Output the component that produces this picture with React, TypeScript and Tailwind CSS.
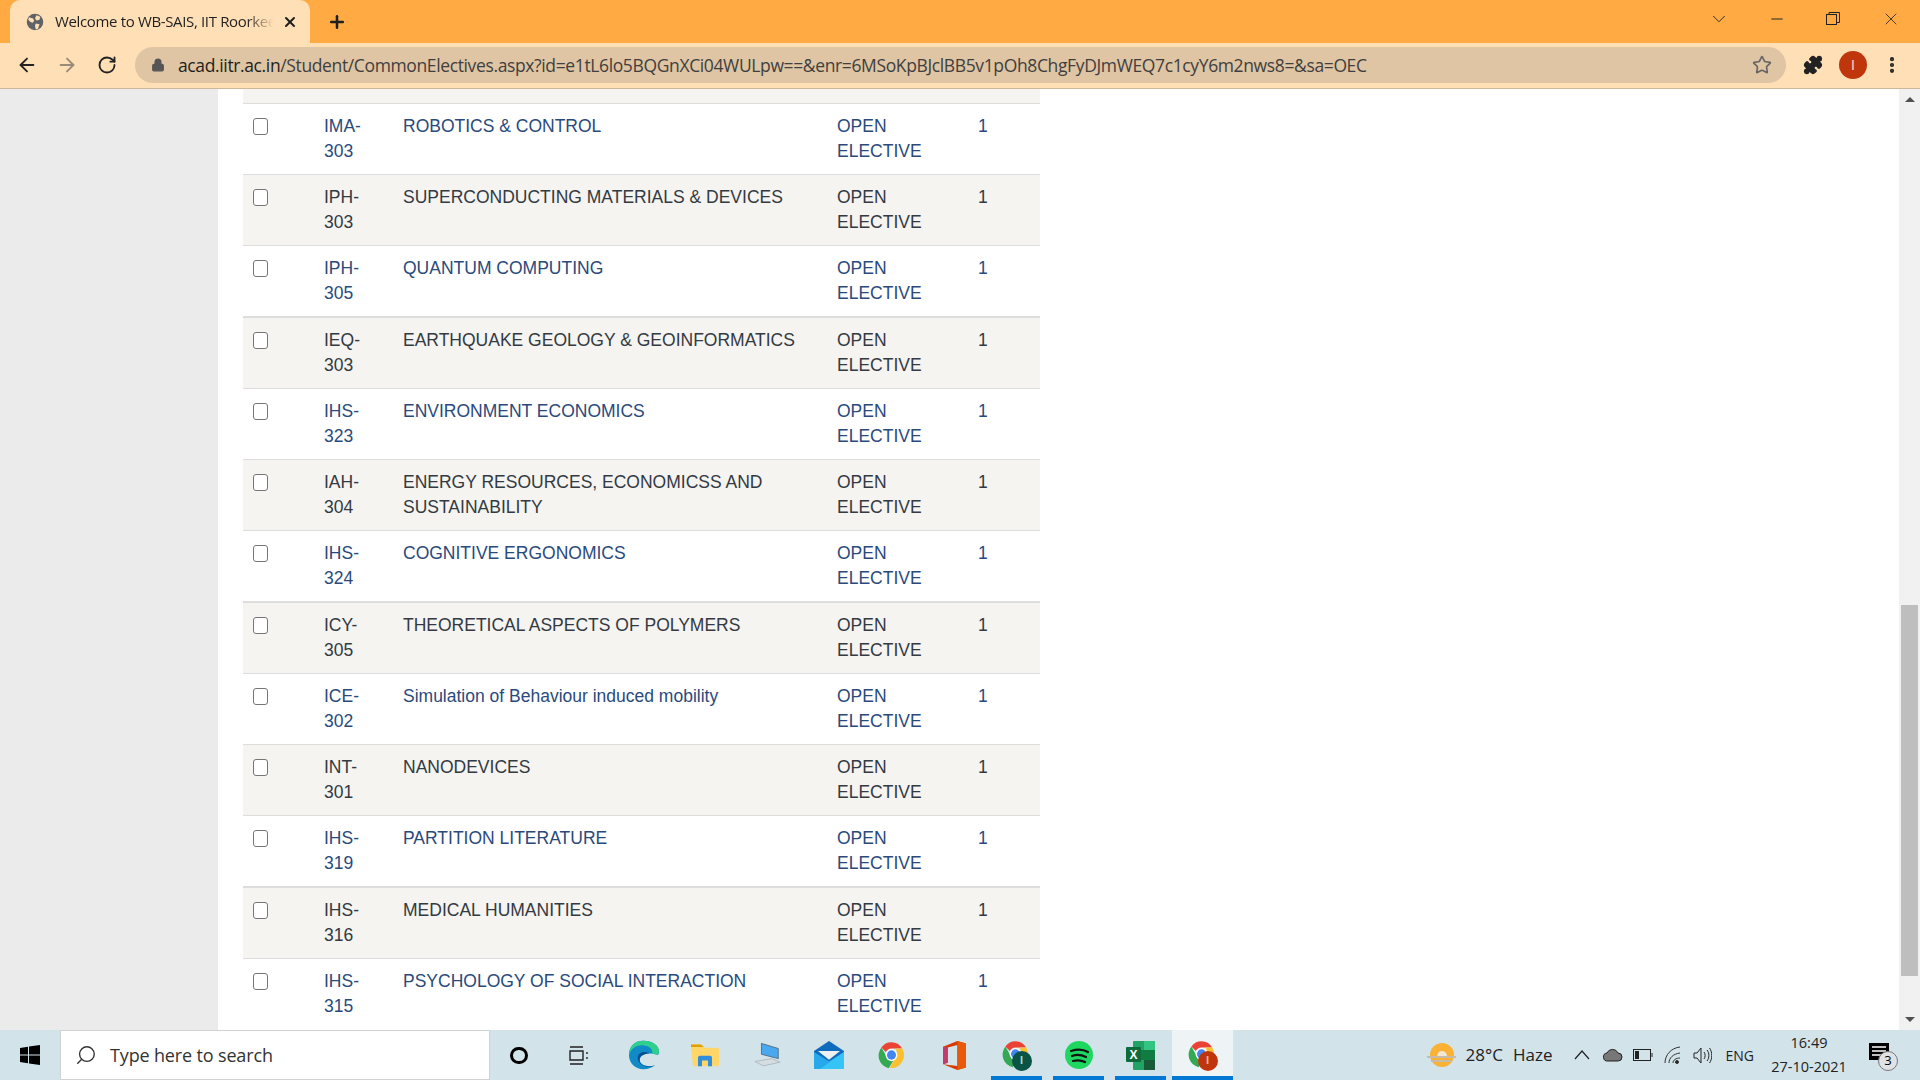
import { ArrowLeft, ArrowRight, RotateCw, Lock, Star, Puzzle, EllipsisVertical, ChevronDown, Minus, X, Plus, Search } from "lucide-react";

type Course = { code: string; num: string; name: React.ReactNode };

const courses: Course[] = [
  { code: "IMA-", num: "303", name: "ROBOTICS & CONTROL" },
  { code: "IPH-", num: "303", name: "SUPERCONDUCTING MATERIALS & DEVICES" },
  { code: "IPH-", num: "305", name: "QUANTUM COMPUTING" },
  { code: "IEQ-", num: "303", name: "EARTHQUAKE GEOLOGY & GEOINFORMATICS" },
  { code: "IHS-", num: "323", name: "ENVIRONMENT ECONOMICS" },
  { code: "IAH-", num: "304", name: "ENERGY RESOURCES, ECONOMICSS AND SUSTAINABILITY" },
  { code: "IHS-", num: "324", name: "COGNITIVE ERGONOMICS" },
  { code: "ICY-", num: "305", name: "THEORETICAL ASPECTS OF POLYMERS" },
  { code: "ICE-", num: "302", name: "Simulation of Behaviour induced mobility" },
  { code: "INT-", num: "301", name: "NANODEVICES" },
  { code: "IHS-", num: "319", name: "PARTITION LITERATURE" },
  { code: "IHS-", num: "316", name: "MEDICAL HUMANITIES" },
  { code: "IHS-", num: "315", name: "PSYCHOLOGY OF SOCIAL INTERACTION" },
];

function Row({ course, index }: { course: Course; index: number }) {
  const striped = index % 2 === 1;
  // every fourth rule is heavier in the capture
  const thick = index % 4 === 3;
  return (
    <div
      className={`grid h-[71.25px] shrink-0 grid-cols-[81px_79px_434px_141px_62px] border-[#dddddd] pt-[10px] text-[17.5px] leading-[25px] ${
        thick ? "border-t-2" : "border-t"
      } ${striped ? "bg-[#f5f4f1] text-[#333a42]" : "bg-white text-[#2a4a7c]"}`}
    >
      <div className="pl-[10px] pt-[4px]">
        <input type="checkbox" className="block h-[17px] w-[15px] appearance-none rounded-[3px] border border-[#767676] bg-white" />
      </div>
      <div>
        {course.code}
        <br />
        {course.num}
      </div>
      <div className="pr-[20px]">{course.name}</div>
      <div>
        OPEN
        <br />
        ELECTIVE
      </div>
      <div>1</div>
    </div>
  );
}

function ChromeIcon() {
  return (
    <svg width="27" height="28" viewBox="0 0 48 48" preserveAspectRatio="none">
      <path d="M24 2a22 22 0 0 1 19 11H24a11 11 0 0 0-10 6L6 11A22 22 0 0 1 24 2z" fill="#ea4335" />
      <path d="M6 11l9.500 16.500A11 11 0 0 0 27 34l-8 12.500A22 22 0 0 1 6 11z" fill="#34a853" />
      <path d="M43 13a22 22 0 0 1-22 33l9-15.500A11 11 0 0 0 33 18l-1-5z" fill="#fbc02d" />
      <circle cx="24" cy="24" r="10.500" fill="#fff" />
      <circle cx="24" cy="24" r="8" fill="#4285f4" />
    </svg>
  );
}

function ChromeBadge({ color, fg }: { color: string; fg: string }) {
  return (
    <div className="relative h-[31px] w-[30px]">
      <ChromeIcon />
      <div
        className="absolute bottom-0 right-0 flex h-[20px] w-[20px] items-center justify-center rounded-full text-[11px] font-bold"
        style={{ backgroundColor: color, color: fg }}
      >
        I
      </div>
    </div>
  );
}

function TaskSlot({ w, active, open, children }: { w: string; active?: boolean; open?: boolean; children: React.ReactNode }) {
  return (
    <div className={`relative flex h-full shrink-0 items-center justify-center ${w} ${active ? "bg-[#eef3f6]" : ""}`}>
      {children}
      {open && <div className="absolute inset-x-0 bottom-0 h-[4px] bg-[#0078d4]" />}
    </div>
  );
}

export default function App() {
  return (
    <div className="flex h-[1080px] w-[1920px] flex-col overflow-hidden bg-white font-['Liberation_Sans',sans-serif]">
      {/* tab strip */}
      <div className="flex h-[43px] shrink-0 items-end bg-[#ffaa42] pl-[10px] text-[#1f1f1f]">
        <div className="flex h-[43px] w-[300px] items-center rounded-t-[10px] bg-[#ffdfb5] pl-[16px] pr-[12px]">
          <svg width="18" height="18" viewBox="0 0 24 24" className="shrink-0">
            <circle cx="12" cy="12" r="11" fill="#5f6368" />
            <path d="M4 6l5 1 2 3-2 3-3-1-3-3zM14 3l5 2-1 4-4 1-2-3zM13 14l5 1-2 6-3 1-1-5z" fill="#ffdfb5" />
          </svg>
          <div className="ml-[11px] flex-1 overflow-hidden whitespace-nowrap font-['Open_Sans',sans-serif] text-[15px] tracking-[-0.35px] [mask-image:linear-gradient(to_right,black_86%,transparent_98%)]">
            Welcome to WB-SAIS, IIT Roorkee
          </div>
          <X size={16} strokeWidth={3} className="ml-[4px] shrink-0" />
        </div>
        <div className="flex h-[43px] w-[54px] items-center justify-center">
          <Plus size={20} strokeWidth={3} />
        </div>
        <div className="flex-1" />
        <div className="flex h-[43px] items-center pb-[5px] text-[#222]">
          <ChevronDown size={22} strokeWidth={1} className="mr-[38px]" />
          <Minus size={18} strokeWidth={1.3} className="mr-[40px]" />
          <svg width="14" height="14" viewBox="0 0 14 14" fill="none" stroke="currentColor" className="mr-[41px]">
            <rect x="0.500" y="2.500" width="10" height="10" />
            <path d="M3 2.500V.5h10.500v10H11" />
          </svg>
          <X size={20} strokeWidth={1} className="mr-[19px]" />
        </div>
      </div>

      {/* toolbar */}
      <div className="flex h-[46px] shrink-0 items-center border-b border-[#d0b79b] bg-[#ffdfb5] pb-[1px]">
        <ArrowLeft size={22} strokeWidth={2} className="ml-[16px] text-[#222]" />
        <ArrowRight size={22} strokeWidth={2} className="ml-[18px] text-[#9a8a78]" />
        <RotateCw size={20} strokeWidth={2.2} className="ml-[19px] text-[#222]" />
        <div className="ml-[18px] flex h-[36px] w-[1651px] items-center rounded-full bg-[#dfc5a3] pl-[16px] pr-[14px]">
          <Lock size={14} fill="#555" strokeWidth={2.200} className="text-[#555]" />
          <div className="ml-[13px] flex-1 whitespace-nowrap font-['Open_Sans',sans-serif] text-[17.5px] tracking-[-0.37px] text-[#3f3f3f]">
            <span className="text-[#1e1e1e]">acad.iitr.ac.in</span>
            /Student/CommonElectives.aspx?id=e1tL6lo5BQGnXCi04WULpw==&amp;enr=6MSoKpBJclBB5v1pOh8ChgFyDJmWEQ7c1cyY6m2nws8=&amp;sa=OEC
          </div>
          <Star size={20} strokeWidth={2} className="text-[#666]" />
        </div>
        <Puzzle size={20} fill="#222" strokeWidth={2} className="ml-[17px] text-[#222]" />
        <div className="ml-[16px] flex h-[28px] w-[28px] items-center justify-center rounded-full bg-[#c0360c] text-[14px] text-[#ffd9c0]">I</div>
        <EllipsisVertical size={20} strokeWidth={3} className="ml-[15px] text-[#222]" />
      </div>

      {/* page */}
      <div className="flex min-h-0 flex-1">
        <div className="w-[218px] shrink-0 bg-[#ebebeb]" />
        <div className="flex min-w-0 flex-1 flex-col overflow-hidden pl-[25px]">
          <div className="flex w-[797px] flex-col">
            <div className="h-[13.5px] shrink-0 bg-[#f5f4f1]" />
            {courses.map((c, i) => (
              <Row key={c.code + c.num} course={c} index={i} />
            ))}
          </div>
        </div>
        {/* scrollbar */}
        <div className="flex w-[21px] shrink-0 flex-col items-center bg-[#f1f1f1]">
          <div className="mt-[8px] h-0 w-0 border-x-[5px] border-b-[5px] border-x-transparent border-b-[#505050]" />
          <div className="mt-[503px] h-[371px] w-[17px] bg-[#bebebe]" />
          <div className="mt-[41px] h-0 w-0 border-x-[5px] border-t-[5px] border-x-transparent border-t-[#505050]" />
        </div>
      </div>

      {/* taskbar */}
      <div className="flex h-[50px] shrink-0 items-center bg-[#d3e3ea]">
        <div className="flex w-[60px] shrink-0 justify-center">
          <svg width="20" height="20" viewBox="0 0 20 20" fill="#000">
            <path d="M0 3l8-1.200V9.500H0zM9 1.600L20 0v9.500H9zM0 10.500h8v7.700L0 17zM9 10.500h11V20L9 18.400z" />
          </svg>
        </div>
        <div className="flex h-[50px] w-[430px] shrink-0 items-center border border-[#cfd3d6] bg-white pl-[14px] font-['Open_Sans',sans-serif] text-[18px] text-[#333]">
          <Search size={22} strokeWidth={1.5} className="-scale-x-100" />
          <span className="ml-[13px] tracking-[-0.15px]">Type here to search</span>
        </div>
        <TaskSlot w="w-[58px]">
          <div className="h-[17px] w-[18px] rounded-full border-[3px] border-black" />
        </TaskSlot>
        <TaskSlot w="w-[62px]">
          <svg width="20" height="19" viewBox="0 0 20 19" fill="none" stroke="#222" strokeWidth="1.400">
            <path d="M1 1h13M1 18h13M1 5h13v9H1zM18 6v2M18 11v2" />
          </svg>
        </TaskSlot>
        <TaskSlot w="w-[66px]">
          <svg width="31" height="30" viewBox="0 0 32 38" preserveAspectRatio="none">
            <path d="M16 1C6 1 1 9 1 19c0 10 6 18 15 18 5 0 9-2 12-5-8 3-16 0-16-7 0-5 5-8 10-8 5 0 9 2 9 2 1-2 1-3 1-4C32 7 25 1 16 1z" fill="#0f8bc8" />
            <path d="M1 19C3 10 10 5 17 7c6 1 9 6 8 10 2 1 4 2 6 1 1-2 1-3 1-4C32 7 25 1 16 1 6 1 1 9 1 19z" fill="#2fd08c" />
            <path d="M12 25c0-5 5-8 10-8-3-3-12-3-12 6 0 6 6 11 12 11 2 0 4-1 6-2-8 3-16 0-16-7z" fill="#0a4f8f" />
          </svg>
        </TaskSlot>
        <TaskSlot w="w-[58px]">
          <svg width="28" height="24" viewBox="0 0 28 30" preserveAspectRatio="none">
            <path d="M0 4a2 2 0 0 1 2-2h8l3 4h13a2 2 0 0 1 2 2v19a2 2 0 0 1-2 2H2z" fill="#ffd667" />
            <path d="M0 2h10l3 3H0z" fill="#e0a000" />
            <path d="M7 29V18a2 2 0 0 1 2-2h10a2 2 0 0 1 2 2v11h-4v-7h-6v7z" fill="#2f8fdc" />
          </svg>
        </TaskSlot>
        <TaskSlot w="w-[68px]">
          <svg width="28" height="26" viewBox="0 0 30 36" preserveAspectRatio="none">
            <path d="M8 2l18 7v14l-18-6z" fill="#4aa8ee" stroke="#4a6478" />
            <path d="M1 27l18-4 9 5-18 5z" fill="#d6dde2" stroke="#a8b4bc" />
          </svg>
        </TaskSlot>
        <TaskSlot w="w-[54px]">
          <svg width="30" height="28" viewBox="0 0 30 36" preserveAspectRatio="none">
            <path d="M15 0L30 13v23H0V13z" fill="#0f6cbd" />
            <path d="M4 13h22l-11 11z" fill="#eef1f3" />
            <path d="M0 14l15 12 15-12v22H0z" fill="#28a8ea" />
            <path d="M30 14v22H6z" fill="#35c4f5" />
          </svg>
        </TaskSlot>
        <TaskSlot w="w-[70px]">
          <ChromeIcon />
        </TaskSlot>
        <TaskSlot w="w-[56px]">
          <svg width="23" height="29" viewBox="0 0 24 36" preserveAspectRatio="none">
            <path d="M0 7L15 0l9 3v30l-9 3-15-7 15 2V5L5 8v19l-5 2z" fill="#d83b01" />
            <path d="M15 0l9 3v30l-9 3z" fill="#e8590c" />
            <path d="M0 7l5 1v19l-5 2z" fill="#c43a6f" />
          </svg>
        </TaskSlot>
        <div className="w-[9px] shrink-0" />
        <TaskSlot w="w-[51px]" open>
          <ChromeBadge color="#0b5345" fg="#a8d8c8" />
        </TaskSlot>
        <div className="w-[11px] shrink-0" />
        <TaskSlot w="w-[51px]" open>
          <svg width="28" height="28" viewBox="0 0 28 28">
            <circle cx="14" cy="14" r="14" fill="#1ed760" />
            <path d="M6 10c6-2 12-2 17 1M7 15c5-2 10-1 14 1M8 20c4-1 8-1 12 1" fill="none" stroke="#111" strokeWidth="2.200" strokeLinecap="round" />
          </svg>
        </TaskSlot>
        <div className="w-[11px] shrink-0" />
        <TaskSlot w="w-[51px]" open>
          <svg width="29" height="29" viewBox="0 0 29 29">
            <rect x="7" y="0" width="22" height="29" rx="1" fill="#21a366" />
            <rect x="18" y="0" width="11" height="9" fill="#33c481" />
            <rect x="7" y="9" width="22" height="10" fill="#107c41" />
            <rect x="18" y="19" width="11" height="10" fill="#185c37" />
            <rect x="0" y="6" width="15" height="15" rx="1" fill="#0f6b3c" />
            <text x="7.500" y="18" textAnchor="middle" fontSize="12" fontWeight="700" fill="#fff">X</text>
          </svg>
        </TaskSlot>
        <div className="w-[6px] shrink-0" />
        <TaskSlot w="w-[61px]" active open>
          <ChromeBadge color="#c0360c" fg="#f4b8a0" />
        </TaskSlot>
        <div className="flex-1" />

        {/* tray */}
        <div className="flex items-center text-[#222]">
          <svg width="29" height="24" viewBox="0 0 29 24" className="mr-[10px]">
            <circle cx="15" cy="12" r="12" fill="#f9b233" />
            <path d="M0 14h29M4 18h20" stroke="#c9bba8" strokeWidth="2" />
            <path d="M10 13a5 5 0 0 1 10 0z" fill="#f2e6d4" />
          </svg>
          <span className="font-['Open_Sans',sans-serif] text-[17px]">28°C</span>
          <span className="ml-[10px] font-['Open_Sans',sans-serif] text-[17px]">Haze</span>
          <svg width="16" height="10" viewBox="0 0 16 10" fill="none" stroke="#222" strokeWidth="1.200" className="ml-[21px]">
            <path d="M1 9l7-8 7 8" />
          </svg>
          <svg width="20" height="14" viewBox="0 0 20 14" className="ml-[13px]" fill="#777" stroke="#222">
            <path d="M5 13a4 4 0 0 1-1-8 6 6 0 0 1 11 0 4 4 0 0 1 0 8z" />
          </svg>
          <svg width="20" height="12" viewBox="0 0 20 12" className="ml-[10px]" fill="none" stroke="#222">
            <rect x="0.500" y="0.500" width="17" height="11" />
            <rect x="2" y="2" width="4" height="8" fill="#222" stroke="none" />
            <path d="M19 4v4" />
          </svg>
          <svg width="17" height="18" viewBox="0 0 17 18" className="ml-[11px]" fill="none" stroke="#333">
            <path d="M1 17C1 9 7 2 16 1M5 17c0-5 4-9 11-10M9 17c0-3 3-5 7-5" />
            <circle cx="13" cy="16" r="1.500" fill="#222" />
          </svg>
          <svg width="19" height="19" viewBox="0 0 19 19" className="ml-[12px]" fill="none" stroke="#222">
            <path d="M1 7h3l4-5v15l-4-5H1zM11 6c1.500 2 1.500 5 0 7M14 4c2.500 3 2.500 8 0 11M16.500 2c3 4 3 11 0 15" />
          </svg>
          <span className="ml-[14px] font-['Open_Sans',sans-serif] text-[14px]">ENG</span>
          <div className="ml-[17px] flex w-[76px] flex-col items-center font-['Open_Sans',sans-serif] text-[14.5px] leading-[24px]">
            <span>16:49</span>
            <span>27-10-2021</span>
          </div>
          <div className="relative ml-[22px] mr-[27px] h-[30px] w-[24px]">
            <svg width="20" height="17" viewBox="0 0 20 17" className="absolute left-0 top-[3px]">
              <path d="M0 0h20v17H0z" fill="#000" />
              <path d="M3 4h14M3 8h14M3 12h9" stroke="#fff" strokeWidth="1.300" />
            </svg>
            <div className="absolute -bottom-[1px] -right-[5px] flex h-[20px] w-[20px] items-center justify-center rounded-full border border-[#777] bg-[#dfe3e6] font-['Open_Sans',sans-serif] text-[13px] text-black">
              3
            </div>
          </div>
        </div>
      </div>
    </div>
  );
}
